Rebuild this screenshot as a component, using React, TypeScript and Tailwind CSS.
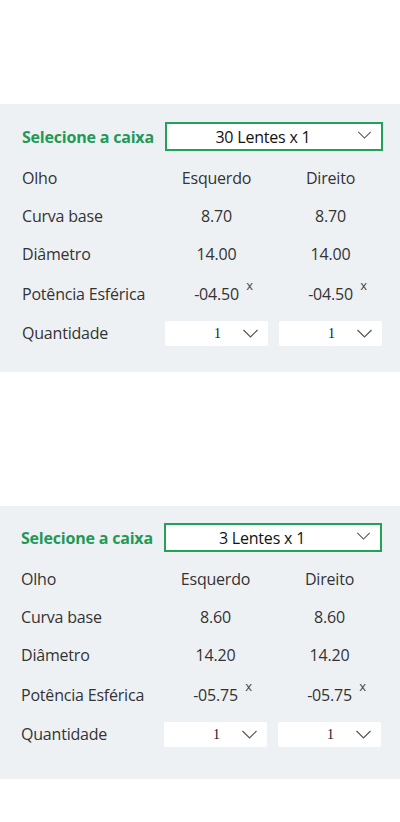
import React from "react";

type Lens = {
  box: string;
  curve: string;
  diameter: string;
  power: string;
};

const lenses: Lens[] = [
  { box: "30 Lentes x 1", curve: "8.70", diameter: "14.00", power: "-04.50" },
  { box: "3 Lentes x 1", curve: "8.60", diameter: "14.20", power: "-05.75" },
];

function Chevron({ className }: { className?: string }) {
  return (
    <svg viewBox="0 0 16 9" fill="none" className={className}>
      <path d="M1 1l7 7 7-7" stroke="currentColor" strokeWidth="1.2" />
    </svg>
  );
}

function Qty() {
  return (
    <div className="flex h-[25px] w-[103px] items-center rounded-[2px] bg-white pl-[49px] pr-[9px]">
      <span className="flex-1 text-[14px] text-[#1b1430] [font-family:'Liberation_Serif',serif]">1</span>
      <Chevron className="h-[9px] w-[17px] text-[#555]" />
    </div>
  );
}

function Power({ value }: { value: string }) {
  return (
    <span className="relative">
      {value}
      <span className="absolute -right-[14px] -top-[6px] text-[13px] text-[#444]">x</span>
    </span>
  );
}

function Row({ label, h, children }: { label: string; h: string; children: React.ReactNode }) {
  return (
    <div className={`flex items-center ${h}`}>
      <div className="w-[143px]">{label}</div>
      {children}
    </div>
  );
}

function Cell({ children }: { children: React.ReactNode }) {
  return <div className="flex w-[103px] justify-center">{children}</div>;
}

function LensPanel({ lens, second }: { lens: Lens; second?: boolean }) {
  return (
    <div
      className={
        second
          ? "bg-[#eef1f4] pl-[21px] pt-[17px] pb-[25px] text-[16px] tracking-[-0.2px] text-[#333]"
          : "bg-[#eef1f4] pl-[22px] pt-[18px] pb-[19px] text-[16px] tracking-[-0.2px] text-[#333]"
      }
    >
      <div className="flex h-[29px] items-center">
        <div className="w-[143px] text-[16px] font-bold text-[#1f9a55]">Selecione a caixa</div>
        <div className="relative flex h-[29px] w-[218px] items-center justify-center border-2 border-[#22a158] bg-white pr-[22px] text-[16px] text-[#111]">
          {lens.box}
          <Chevron className="absolute right-[9px] top-[7px] h-[8px] w-[15px] text-[#555]" />
        </div>
      </div>
      <div className="mt-[8px]">
        <Row label="Olho" h="h-[38px]">
          <Cell>Esquerdo</Cell>
          <div className="w-[11px]" />
          <Cell>Direito</Cell>
        </Row>
        <Row label="Curva base" h="h-[37px]">
          <Cell>{lens.curve}</Cell>
          <div className="w-[11px]" />
          <Cell>{lens.curve}</Cell>
        </Row>
        <Row label="Diâmetro" h="h-[40px]">
          <Cell>{lens.diameter}</Cell>
          <div className="w-[11px]" />
          <Cell>{lens.diameter}</Cell>
        </Row>
        <Row label="Potência Esférica" h="h-[39px]">
          <Cell>
            <Power value={lens.power} />
          </Cell>
          <div className="w-[11px]" />
          <Cell>
            <Power value={lens.power} />
          </Cell>
        </Row>
        <Row label="Quantidade" h="h-[40px]">
          <Qty />
          <div className="w-[11px]" />
          <Qty />
        </Row>
      </div>
    </div>
  );
}

export default function App() {
  return (
    <div className="min-h-[822px] bg-white pt-[104px] [font-family:'Open_Sans',sans-serif]">
      <LensPanel lens={lenses[0]} />
      <div className="h-[134px]" />
      <LensPanel lens={lenses[1]} second />
    </div>
  );
}
